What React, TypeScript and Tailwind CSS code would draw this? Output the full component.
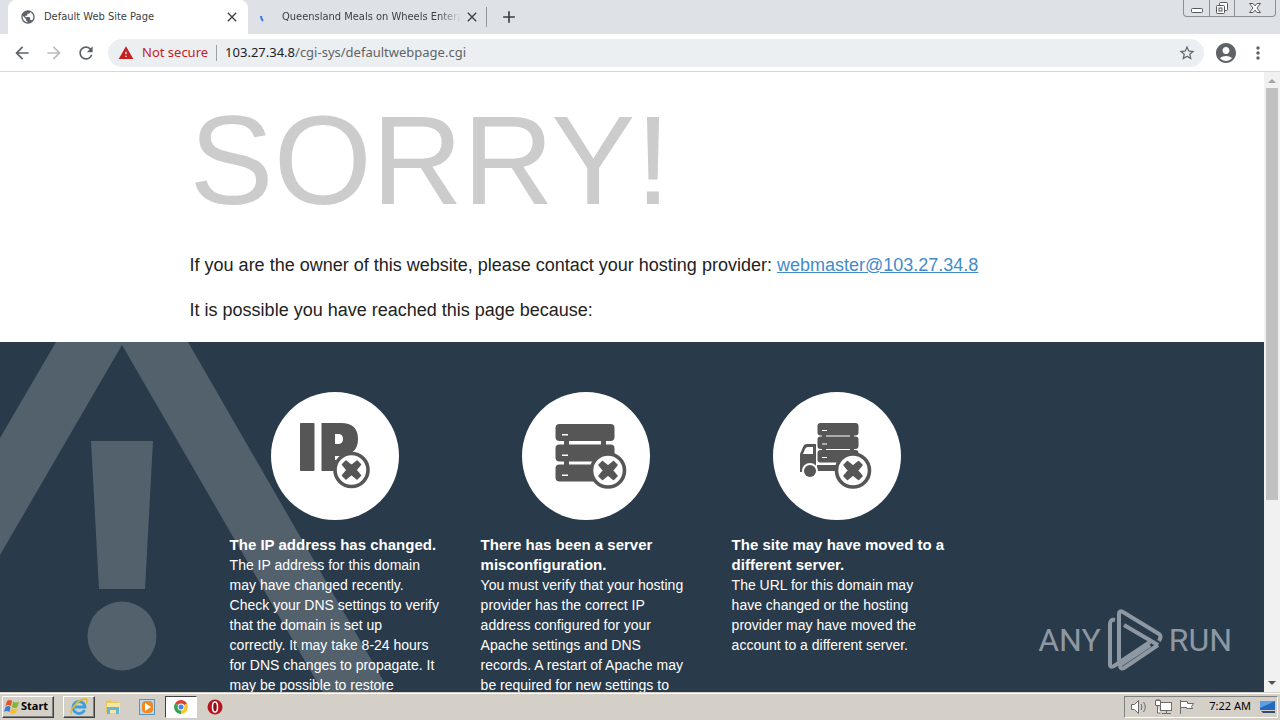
import {
    MdAccountCircle,
    MdAdd,
    MdArrowBack,
    MdArrowForward,
    MdClose,
    MdMoreVert,
    MdPublic,
    MdRefresh,
    MdStarBorder,
    MdWarning,
} from "react-icons/md";
import type { ReactNode } from "react";

function WindowControls() {
    return (
        <div className="ml-auto mr-1 flex h-[17px] w-[93px] rounded-b border border-t-0 border-[#8a8f96] text-[#53585e]">
            <button aria-label="Minimize" className="flex w-[26px] items-center justify-center border-r border-[#8a8f96]">
                <svg width="14" height="14" viewBox="0 0 14 14">
                    <rect x="1.5" y="7.5" width="11" height="4" rx="1" fill="#fff" stroke="currentColor" />
                </svg>
            </button>
            <button aria-label="Restore" className="flex w-[25px] items-center justify-center border-r border-[#8a8f96]">
                <svg width="14" height="14" viewBox="0 0 14 14" fill="#fff" stroke="currentColor">
                    <rect x="4.5" y="1.5" width="8" height="8" rx="1" />
                    <rect x="1.5" y="4.5" width="8" height="8" rx="1" />
                    <rect x="4" y="7" width="3" height="3" />
                </svg>
            </button>
            <button aria-label="Close window" className="flex flex-1 items-center justify-center">
                <svg width="14" height="14" viewBox="0 0 14 14">
                    <path d="M1.5 2.5h3.5l2 2.4 2-2.4h3.5L9 7l3.500 4.500H9L7 9.100 5 11.500H1.500L5 7z" fill="#fff" stroke="currentColor" />
                </svg>
            </button>
        </div>
    );
}

function TabStrip() {
    return (
        <div className="flex h-[34px] shrink-0 bg-[#dee1e6] pl-2 font-['DejaVu_Sans_Condensed','Noto_Sans',sans-serif] text-[11px] text-[#3c4043]">
            <div className="flex w-60 items-center rounded-t-lg bg-white pl-3 pr-2">
                <MdPublic className="size-4 text-[#5f6368]" />
                <span className="ml-2 flex-1 truncate">Default Web Site Page</span>
                <button aria-label="Close tab">
                    <MdClose className="size-4" />
                </button>
            </div>
            <div className="flex w-[239px] items-center pl-3">
                <svg width="14" height="14" viewBox="0 0 14 14" className="shrink-0">
                    <path d="M1 6q0 3 2 5" fill="none" stroke="#3b78e7" strokeWidth="2" />
                </svg>
                <span className="ml-2 flex-1 whitespace-nowrap [mask-image:linear-gradient(to_right,#000_86%,transparent_98%)]">
                    Queensland Meals on Wheels Enterp
                </span>
                <button aria-label="Close tab">
                    <MdClose className="size-4" />
                </button>
                <span className="ml-1.5 h-5 w-px bg-[#92959a]" />
            </div>
            <button aria-label="New tab" className="ml-3">
                <MdAdd className="size-5" />
            </button>
            <WindowControls />
        </div>
    );
}

function Toolbar() {
    return (
        <div className="flex h-[38px] shrink-0 items-center border-b border-[#d5d7da] bg-white px-3 font-['Noto_Sans',sans-serif] text-[13px] text-[#5f6368]">
            <button aria-label="Back">
                <MdArrowBack className="size-5" />
            </button>
            <button aria-label="Forward" className="ml-3 text-[#babcbe]">
                <MdArrowForward className="size-5" />
            </button>
            <button aria-label="Reload" className="ml-3">
                <MdRefresh className="size-5" />
            </button>
            <div className="ml-3 flex h-7 flex-1 items-center rounded-full bg-[#eceff1] px-2">
                <MdWarning className="ml-0.5 size-4 text-[#c5221f]" />
                <span className="ml-2 text-[#c5221f]">Not secure</span>
                <span className="mx-2 h-4 w-px bg-[#9aa0a6]" />
                <label htmlFor="address" className="text-[#202124]">103.27.34.8</label>
                <input id="address" defaultValue="/cgi-sys/defaultwebpage.cgi" className="min-w-0 flex-1 bg-transparent outline-none" />
                <button aria-label="Bookmark this page">
                    <MdStarBorder className="size-[18px]" />
                </button>
            </div>
            <button aria-label="Profile" className="ml-2.5">
                <MdAccountCircle className="size-6" />
            </button>
            <button aria-label="Menu" className="ml-2.5">
                <MdMoreVert className="size-5" />
            </button>
        </div>
    );
}

// round "x" badge that sits on the lower right of every reason icon
function ErrorBadge({ cx, cy }: { cx: number; cy: number }) {
    return (
        <g transform={`translate(${cx} ${cy})`}>
            <circle r="16.500" fill="#fff" stroke="#565656" strokeWidth="3.600" />
            <path
                d="M-9 -5.500L-5.500 -9L0 -4.500L5.500 -9L9 -5.500L4.500 0L9 5.500L5.500 9L0 4.500L-5.500 9L-9 5.500L-4.500 0Z"
                fill="#565656"
                stroke="#565656"
                strokeWidth="1.500"
                strokeLinejoin="round"
            />
        </g>
    );
}

function IpIcon() {
    return (
        <svg viewBox="0 0 128 128" className="size-32" fill="#565656">
            <circle cx="64" cy="64" r="64" fill="#fff" />
            <rect x="29" y="31" width="14.500" height="48" rx="1" />
            <path fillRule="evenodd" d="M50.500 31H70q17 0 17 16T70 63H66v16H50.500zM64 42v10h3q5 0 5-5t-5-5z" />
            <path d="M64 63h14l-10 16h-4z" />
            <rect x="64" y="64" width="5" height="4" fill="#fff" />
            <ErrorBadge cx={80.500} cy={78} />
        </svg>
    );
}

function ServerIcon() {
    return (
        <svg viewBox="0 0 128 128" className="size-32" fill="#565656">
            <circle cx="64" cy="64" r="64" fill="#fff" />
            <path d="M42 46h5v30h-5zM79 46h5v20h-5z" />
            {[32, 52.500, 72.500].map((y) => (
                <g key={y}>
                    <rect x="33.500" y={y} width="59" height="17" rx="4" />
                    <rect x="40" y={y + 10} width="6" height="1.500" fill="#fff" />
                </g>
            ))}
            <ErrorBadge cx={86} cy={78.500} />
        </svg>
    );
}

function TruckIcon() {
    return (
        <svg viewBox="0 0 128 128" className="size-32" fill="#565656">
            <circle cx="64" cy="64" r="64" fill="#fff" />
            <path d="M49 42h4v20h-4zM77 42h4v20h-4z" />
            {[31, 44.500, 58].map((y) => (
                <g key={y}>
                    <rect x="44.500" y={y} width="41" height="12.500" rx="3" />
                    <rect x="49" y={y + 7} width="5" height="1" fill="#fff" />
                </g>
            ))}
            <path fillRule="evenodd" d="M27 80V62l3-7q1-3 4-3h9v28zM30 62h10v-7h-5q-2 0-3 2z" />
            <path d="M44 73h25v6H44z" />
            <circle cx="37" cy="79" r="8" fill="#fff" />
            <circle cx="37" cy="79" r="6" />
            <ErrorBadge cx={80} cy={78.500} />
        </svg>
    );
}

const reasons = [
    {
        icon: <IpIcon />,
        title: "The IP address has changed.",
        text: "The IP address for this domain may have changed recently. Check your DNS settings to verify that the domain is set up correctly. It may take 8-24 hours for DNS changes to propagate. It may be possible to restore",
    },
    {
        icon: <ServerIcon />,
        title: "There has been a server misconfiguration.",
        text: "You must verify that your hosting provider has the correct IP address configured for your Apache settings and DNS records. A restart of Apache may be required for new settings to",
    },
    {
        icon: <TruckIcon />,
        title: "The site may have moved to a different server.",
        text: "The URL for this domain may have changed or the hosting provider may have moved the account to a different server.",
    },
];

function Watermark() {
    return (
        <div className="absolute bottom-5 right-8 flex items-center gap-1.5 font-[Roboto,sans-serif] text-[32px] text-[#8d98a3]">
            <span>ANY</span>
            <svg width="56" height="64" viewBox="0 0 56 64" fill="none" stroke="currentColor" strokeWidth="4">
                <path d="M8 12q-5-1-5 4v41q0 3 4 1l36-24" />
                <path d="M12 53V6q0-4 4-2l36 22q3 2 0 7" />
                <path d="M17 17l34 20M51 37L17 60q-4 2-4-3l30-20" />
            </svg>
            <span>RUN</span>
        </div>
    );
}

function DefaultPage() {
    return (
        <main className="flex flex-1 flex-col overflow-hidden bg-white">
            <div className="mx-auto w-[70%] pt-[26px] text-lg leading-5 text-[#222]">
                <h1 className="text-[126px] leading-none text-[#ccc]">SORRY!</h1>
                <p className="mt-[31px]">
                    If you are the owner of this website, please contact your hosting provider:{" "}
                    <a href="mailto:webmaster@103.27.34.8" className="text-[#428bca] underline">
                        webmaster@103.27.34.8
                    </a>
                </p>
                <p className="mt-[25px] mb-[22px]">It is possible you have reached this page because:</p>
            </div>
            <section className="relative min-h-0 flex-1 overflow-hidden bg-[#293a4a] text-white">
                <svg width="392" height="352" viewBox="0 0 392 352" className="absolute left-0 top-0" fill="#53616d">
                    <path d="M56 0H188L391 352H324L122 3L0 213V96z" />
                    <path d="M91 99h62l-8 148H99z" />
                    <circle cx="122" cy="294" r="34.500" />
                </svg>
                <div className="relative mx-auto w-[70%] pt-[50px]">
                    <div className="grid max-w-[753px] grid-cols-3">
                        {reasons.map((reason) => (
                            <div key={reason.title} className="pl-10 text-sm leading-5">
                                <div className="mb-[15px] flex justify-center">{reason.icon}</div>
                                <h2 className="-mr-2 text-[15px] font-bold leading-5">{reason.title}</h2>
                                <p>{reason.text}</p>
                            </div>
                        ))}
                    </div>
                </div>
                <Watermark />
            </section>
        </main>
    );
}

function Scrollbar() {
    return (
        <div className="flex w-4 shrink-0 flex-col items-center bg-[#f1f1f1]">
            <svg width="16" height="16" viewBox="0 0 16 16">
                <path d="M4 11h8L8 7z" fill="#a3a3a3" />
            </svg>
            <div className="w-full flex-1 px-0.5">
                <div className="h-[70%] bg-[#c1c1c1]" />
            </div>
            <svg width="16" height="16" viewBox="0 0 16 16">
                <path d="M4 5h8L8 9z" fill="#505050" />
            </svg>
        </div>
    );
}

function TaskButton({ label, className, children }: { label: string; className?: string; children: ReactNode }) {
    return (
        <button aria-label={label} className={`flex h-[22px] w-8 items-center justify-center ${className ?? ""}`}>
            {children}
        </button>
    );
}

const raised = "border border-t-white border-l-white border-r-[#404040] border-b-[#404040] shadow-[inset_-1px_-1px_#808080]";
const pressed = "border border-t-[#404040] border-l-[#404040] border-r-white border-b-white bg-white";

function Taskbar() {
    return (
        <footer className="flex h-7 shrink-0 items-center border-t border-[#d4d0c8] bg-[#d4d0c8] px-0.5 font-['Noto_Sans',sans-serif] text-[11px] text-black shadow-[inset_0_1px_#fff]">
            <button className={`flex h-[22px] w-[52px] items-center gap-px pl-px font-bold ${raised}`}>
                <svg width="16" height="16" viewBox="0 0 16 16" className="shrink-0">
                    <path d="M3 2q3-2 5 0L7 7Q4 5 1.500 7z" fill="#e5532a" />
                    <path d="M9 2.500q3 2 6 0L13.500 8q-3 2-5.500 0z" fill="#7db738" />
                    <path d="M1.500 8q3-2 5 0l-1 5q-3-2-5.500 0z" fill="#3b7fd0" />
                    <path d="M7.500 9q3 2 6 0L12 14q-3 2-6 0z" fill="#f7bf2c" />
                </svg>
                Start
            </button>
            <div className="ml-[9px] flex gap-0.5">
                <TaskButton label="Internet Explorer" className={raised}>
                    <svg width="18" height="18" viewBox="0 0 18 18" fill="none">
                        <path d="M14.500 12A6 6 0 1 1 15 9H5" stroke="#3aa0e0" strokeWidth="2.800" />
                        <path d="M2 16Q-1 14 5 7T16 1q2 1 0 5" stroke="#e8b923" strokeWidth="1.500" />
                    </svg>
                </TaskButton>
                <TaskButton label="Explorer">
                    <svg width="18" height="18" viewBox="0 0 18 18">
                        <path d="M2 3l5-1 1 2h7v11H2z" fill="#e6c65a" />
                        <path d="M3 5h13v10H3z" fill="#f5e7a1" />
                        <path d="M3 16V9h12v7h-3v-4H6v4z" fill="#65b7d8" />
                    </svg>
                </TaskButton>
                <TaskButton label="Media Player">
                    <svg width="18" height="18" viewBox="0 0 18 18">
                        <rect x="1.500" y="1.500" width="15" height="15" fill="#b9d7ee" stroke="#5594c4" />
                        <rect x="4" y="3" width="11" height="12" rx="4" fill="#f08a1c" />
                        <path d="M7 5l6 4-6 4z" fill="#fff" />
                    </svg>
                </TaskButton>
                <TaskButton label="Chrome" className={pressed}>
                    <svg width="16" height="16" viewBox="0 0 16 16">
                        <path d="M8 8L2 4.500A7 7 0 0 1 14 4.500z" fill="#e0402f" />
                        <path d="M8 8l6-3.500A7 7 0 0 1 8 15z" fill="#f9c72e" />
                        <path d="M8 8v7A7 7 0 0 1 2 4.500z" fill="#34a350" />
                        <circle cx="8" cy="8" r="3.400" fill="#fff" />
                        <circle cx="8" cy="8" r="2.500" fill="#4285f4" />
                    </svg>
                </TaskButton>
                <TaskButton label="Opera">
                    <svg width="16" height="16" viewBox="0 0 16 16">
                        <circle cx="8" cy="8" r="7.500" fill="#b91320" />
                        <ellipse cx="8" cy="8" rx="2.500" ry="5" fill="#8b0d17" stroke="#fff" strokeWidth="1.500" />
                    </svg>
                </TaskButton>
            </div>
            <div className="ml-auto flex h-[22px] items-center border border-b-white border-l-[#808080] border-r-white border-t-[#808080] pl-1.5">
                <svg width="70" height="18" viewBox="0 0 70 18" fill="#fff" stroke="#6b6b6b">
                    <path d="M.5 6.500h3l4-4v13l-4-4h-3z" />
                    <path d="M10 6q2 3 0 6M12.500 4q3.500 5 0 10" fill="none" />
                    <rect x="29.500" y="4.500" width="11" height="8" />
                    <path d="M31 15.500h9M35.500 13v2M26.500 8v7h3M24.500 2.500h5v5h-5zM26 1v2M28 1v2" />
                    <path d="M49.500 2v14" />
                    <path d="M49.500 3.500h7v2h6l-2 3 1 2h-6v-1h-6z" />
                </svg>
                <span className="ml-2 whitespace-nowrap">7:22 AM</span>
                <svg width="18" height="16" viewBox="0 0 18 16" className="ml-2">
                    <path d="M1 2h15v9H1z" fill="#2468c0" />
                    <path d="M1 2h15L1 9z" fill="#5f9ee5" />
                    <path d="M2 12h14v2H4z" fill="#344c6c" />
                </svg>
            </div>
        </footer>
    );
}

export default function App() {
    return (
        <div className="flex h-screen flex-col overflow-hidden font-['Liberation_Sans',Arial,sans-serif]">
            <TabStrip />
            <Toolbar />
            <div className="flex min-h-0 flex-1">
                <DefaultPage />
                <Scrollbar />
            </div>
            <Taskbar />
        </div>
    );
}
